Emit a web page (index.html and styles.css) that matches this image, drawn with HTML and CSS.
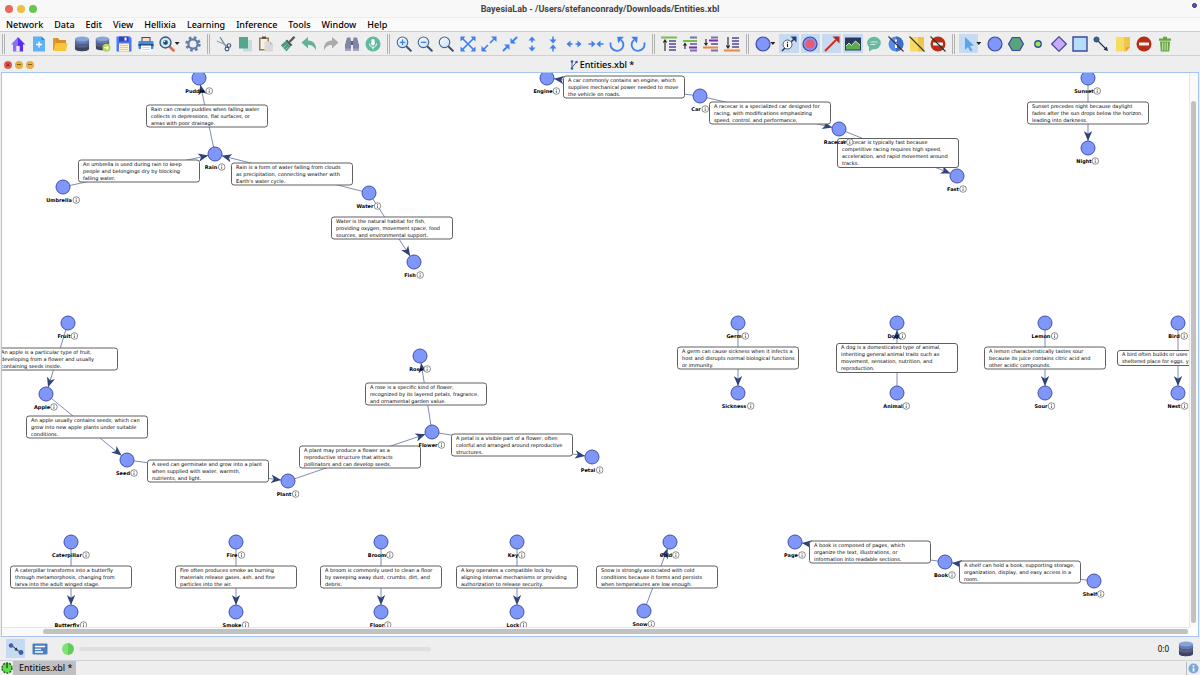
FILE: index.html
```html
<!DOCTYPE html>
<html lang="en">
<head>
<meta charset="utf-8">
<title>BayesiaLab - Entities.xbl</title>
<link rel="stylesheet" href="styles.css">
</head>
<body>
<svg class="defs" aria-hidden="true">
  <defs>
    <linearGradient id="lensFill" x1="0" y1="0" x2="1" y2="1"><stop offset="0" stop-color="#fff"/><stop offset="1" stop-color="#c3dcf8"/></linearGradient>
    <symbol id="db" viewBox="0 0 16 16">
      <path d="M1 3v10c0 3 14 3 14 0V3z" fill="#3f4560"/>
      <path d="M1 3v7c0 3 14 3 14 0V3z" fill="#595f80"/>
      <path d="M1 3v4c0 3 14 3 14 0V3z" fill="#6a79b4"/>
      <ellipse cx="8" cy="3" rx="7" ry="2.4" fill="#86a5d8"/>
      <path d="M1 6.4c0 3 14 3 14 0M1 9.900c0 3 14 3 14 0" fill="none" stroke="#39405f" stroke-width=".6"/>
    </symbol>
    <symbol id="lens" viewBox="0 0 16 16">
      <path d="M10.500 10.500l4.300 4.300" stroke="#3d5573" stroke-width="2" stroke-linecap="round"/>
      <circle cx="6.500" cy="6.300" r="5.300" fill="url(#lensFill)" stroke="#46648c" stroke-width="1.100"/>
    </symbol>
    <symbol id="stop" viewBox="0 0 16 16">
      <circle cx="8" cy="8" r="7.500" fill="#b72d18"/><rect x="3" y="6.500" width="10" height="3" rx=".5" fill="#f4f0f0"/>
    </symbol>
    <symbol id="note" viewBox="0 0 16 16">
      <path d="M1 1h8v14.500H1z" fill="#f6dc62"/><path d="M9 1h6v10l-4 4.500H9z" fill="#efc64c"/><path d="M15 11l-4 4.500V11z" fill="#f0963a"/>
    </symbol>
    <marker id="head" viewBox="0 0 9 8" markerWidth="10" markerHeight="9" refX="9" refY="4" orient="auto" markerUnits="userSpaceOnUse">
      <path d="M9 4L0 .200L2.500 4L0 7.800z" fill="#2f4378"/>
    </marker>
  </defs>
</svg>

<div class="window">
  <header class="titlebar">
    <div class="lights">
      <button class="light red" aria-label="Close"></button>
      <button class="light amber" aria-label="Minimize"></button>
      <button class="light green" aria-label="Zoom"></button>
    </div>
    <h1 class="title">BayesiaLab - /Users/stefanconrady/Downloads/Entities.xbl</h1>
    <div class="title-end"><span class="badge"></span></div>
  </header>

  <nav class="menubar">
    <button>Network</button><button>Data</button><button>Edit</button><button>View</button><button>Hellixia</button><button>Learning</button><button>Inference</button><button>Tools</button><button>Window</button><button>Help</button>
  </nav>

  <div class="toolbar">
    <span class="sep"></span>
    <div class="group g-file">
      <button aria-label="Home"><svg viewBox="0 0 16 16"><path d="M1 8.500L8 1v14.500H3V8.500z" fill="#8c6cff"/><path d="M8 1l7.200 7.500H13v7H8z" fill="#5b2df0"/><path d="M6.300 10h3.400v5.500H6.300z" fill="#eee"/></svg></button>
      <button aria-label="New"><svg viewBox="0 0 16 16"><path d="M2 .5h8.500l3.500 3.500v11.500H2z" fill="#5fb2f8"/><path d="M10.500 .5l3.500 3.500h-3.500z" fill="#2c84d6"/><path d="M8 5.500v6M5 8.500h6" stroke="#fff" stroke-width="1.300"/></svg></button>
      <button aria-label="Open"><svg viewBox="0 0 16 16"><path d="M1 2h5l1.500 2H14v4H1z" fill="#d98e22"/><path d="M1 2h3v12H1z" fill="#e0982b"/><path d="M3.500 7H15.500l-1.500 8H1.500z" fill="#f8c53a"/></svg></button>
      <button aria-label="Database"><svg><use href="#db"/></svg></button>
      <button aria-label="Database link"><svg viewBox="0 0 16 16"><use href="#db" width="15" height="15"/><circle cx="11.500" cy="11.700" r="4" fill="#b3d94a"/><path d="M9 11.700h4M11.500 9.900l1.800 1.800-1.800 1.800" fill="none" stroke="#fff" stroke-width="1.200"/></svg></button>
      <button aria-label="Save"><svg viewBox="0 0 16 16"><path d="M.5 .5H14l1.500 2v13H.5z" fill="#4c78ff"/><path d="M3 .5h9.500v5H3z" fill="#3444a8"/><path d="M8.500 1.500h2v3h-2z" fill="#fff"/><path d="M3 7.500h10v8H3z" fill="#fff3d0"/><path d="M4 9.500h8M4 11.500h8M4 13.500h8" stroke="#f0c460" stroke-width=".9"/></svg></button>
      <button aria-label="Print"><svg viewBox="0 0 16 16"><path d="M3.500 1h9v5h-9z" fill="#384763"/><path d="M4.500 2h7v4h-7z" fill="#f8dfc6"/><rect x=".5" y="5" width="15" height="8" rx="1" fill="#3e8be4"/><path d="M.5 8h15v2H.5z" fill="#264d8b"/><path d="M3 9.500h10v6H3z" fill="#fff"/><path d="M4.500 11.500h7M4.500 13.500h7" stroke="#c7cbd6" stroke-width=".8"/></svg></button>
      <button aria-label="Preview"><svg viewBox="0 0 16 16"><path d="M10.500 10.500l4 4" stroke="#e86b4b" stroke-width="2.600" stroke-linecap="round"/><circle cx="6.500" cy="6.500" r="5.500" fill="#a8dcf4" stroke="#3c5471" stroke-width="1.300"/><circle cx="6.500" cy="6.500" r="3.600" fill="none" stroke="#fff" stroke-width=".7"/><circle cx="6.500" cy="6.500" r="2.300" fill="#33455f"/><circle cx="5.500" cy="5.500" r=".8" fill="#fff"/></svg></button>
      <span class="drop"></span>
      <button aria-label="Settings"><svg viewBox="0 0 16 16"><circle cx="8" cy="8" r="4.600" fill="none" stroke="#607da6" stroke-width="2.200"/><circle cx="8" cy="8" r="6.400" fill="none" stroke="#607da6" stroke-width="2.600" stroke-dasharray="2.600 2.427"/></svg></button>
    </div>
    <span class="sep"></span>
    <div class="group g-edit">
      <button aria-label="Cut"><svg viewBox="0 0 16 16"><path d="M4 1l6.500 10.500" stroke="#6d8796" stroke-width="1.300"/><path d="M.8 5l10.500 4.500" stroke="#8ba4b0" stroke-width="1.200"/><circle cx="11" cy="13" r="1.900" fill="none" stroke="#3c5878" stroke-width="1.100"/><circle cx="13" cy="9.500" r="1.800" fill="none" stroke="#3c5878" stroke-width="1.100"/></svg></button>
      <button aria-label="Copy"><svg viewBox="0 0 16 16"><path d="M6 4h9v11.500H6z" fill="#c5dce0"/><path d="M2 1h9v11.500H2z" fill="#56a58e"/></svg></button>
      <button aria-label="Paste"><svg viewBox="0 0 16 16"><path d="M1 1.500h10v13H1z" fill="#9a7b4c"/><path d="M2.500 3h7v10h-7z" fill="#f4f0e6"/><path d="M4 .5h4v2.500H4z" fill="#555"/><path d="M6.500 5.500h5.500l3 3v7H6.500z" fill="#d9d9d9"/><path d="M12 5.500l3 3h-3z" fill="#b8b8b8"/></svg></button>
      <button aria-label="Brush"><svg viewBox="0 0 16 16"><path d="M14.500 .8L9.500 6" stroke="#555" stroke-width="2.200"/><path d="M7 3.500l5.500 5.500-2 1.500L5.500 5z" fill="#545b5b"/><path d="M5.500 5l5 5.500-4 5L.8 9.300z" fill="#4f9c83"/><path d="M3.500 11.500l2-2M5.500 13.500l2-2" stroke="#b5dccc" stroke-width=".8"/></svg></button>
      <button aria-label="Undo"><svg viewBox="0 0 16 16"><path d="M.5 6.500L7 1v3.500c5.500 0 8.500 3.500 8 10C13.500 11 11.500 9 7 9v3.500z" fill="#68b196"/></svg></button>
      <button aria-label="Redo"><svg viewBox="0 0 16 16"><path d="M15.500 6.500L9 1v3.500c-5.500 0-8.500 3.500-8 10C2.500 11 4.500 9 9 9v3.500z" fill="#a9aaa9"/></svg></button>
      <button aria-label="Find"><svg viewBox="0 0 16 16"><path d="M3 1.500h3.500l.5 4V15H1V9z" fill="#7f86a6"/><path d="M13 1.500H9.500l-.5 4V15h6V9z" fill="#7f86a6"/><path d="M7 5h2v4H7z" fill="#596080"/><path d="M1 12.500h6V15H1zM9 12.500h6V15H9z" fill="#a3a8c0"/></svg></button>
      <button aria-label="Dictate"><svg viewBox="0 0 16 16"><circle cx="8" cy="8" r="7.500" fill="#61b9a1"/><rect x="6.300" y="3" width="3.400" height="6.500" rx="1.700" fill="#fff"/><path d="M4.500 7.500c0 5 7 5 7 0M8 11v2.500" fill="none" stroke="#fff"/></svg></button>
    </div>
    <span class="sep"></span>
    <div class="group g-view">
      <button aria-label="Zoom in"><svg viewBox="0 0 16 16"><use href="#lens"/><path d="M6.500 3.500v5.600M3.700 6.300h5.600" stroke="#3f80e6" stroke-width="1.300"/></svg></button>
      <button aria-label="Zoom out"><svg viewBox="0 0 16 16"><use href="#lens"/><path d="M3.700 6.300h5.600" stroke="#3f80e6" stroke-width="1.300"/></svg></button>
      <button aria-label="Zoom default"><svg><use href="#lens"/></svg></button>
      <button aria-label="Fit"><svg viewBox="0 0 16 16"><path d="M2 2l12 12M14 2L2 14" stroke="#3f80f0" stroke-width="1.700"/><path d="M.5 .5h5l-5 5zM15.500 .5v5l-5-5zM.5 15.500v-5l5 5zM15.500 15.500h-5l5-5z" fill="#3f80f0"/></svg></button>
      <button aria-label="Expand"><svg viewBox="0 0 16 16"><path d="M3 13l4-4M9 7l4-4" stroke="#3f80f0" stroke-width="1.700"/><path d="M15.500 .5v5.500l-5.500-5.500zM.5 15.500v-5.500l5.500 5.500z" fill="#3f80f0"/></svg></button>
      <button aria-label="Shrink"><svg viewBox="0 0 16 16"><path d="M1 15l5-5M10 6l5-5" stroke="#3f80f0" stroke-width="1.800"/><path d="M8.500 2v5.500H14zM7.500 14V8.500H2z" fill="#3f80f0"/></svg></button>
      <button aria-label="Expand vertically"><svg viewBox="0 0 16 16"><path d="M8 2v4.500M8 9.500V14" stroke="#3f80f0" stroke-width="1.500"/><path d="M8 .5l3.500 4h-7zM8 15.500l3.500-4h-7z" fill="#3f80f0"/></svg></button>
      <button aria-label="Shrink vertically"><svg viewBox="0 0 16 16"><path d="M8 .5v4M8 11.500v4" stroke="#3f80f0" stroke-width="1.500"/><path d="M8 7.500l3.500-4h-7zM8 8.500l3.500 4h-7z" fill="#3f80f0"/></svg></button>
      <button aria-label="Expand horizontally"><svg viewBox="0 0 16 16"><path d="M2 8h4.500M9.500 8H14" stroke="#3f80f0" stroke-width="1.500"/><path d="M.5 8l4-3.500v7zM15.500 8l-4-3.500v7z" fill="#3f80f0"/></svg></button>
      <button aria-label="Shrink horizontally"><svg viewBox="0 0 16 16"><path d="M.5 8h4M11.500 8h4" stroke="#3f80f0" stroke-width="1.500"/><path d="M7.500 8l-4-3.500v7zM8.500 8l4-3.500v7z" fill="#3f80f0"/></svg></button>
      <button aria-label="Rotate left"><svg viewBox="0 0 16 16"><path d="M1.700 6.500C.5 11 4 14.800 8 14.800c6 0 8.500-7 4-11" fill="none" stroke="#3f80f0" stroke-width="1.800"/><path d="M8.300 .8h6.500L9 7.300z" fill="#3f80f0"/></svg></button>
      <button aria-label="Rotate right"><svg viewBox="0 0 16 16"><path d="M14.300 6.500C15.500 11 12 14.800 8 14.800c-6 0-8.500-7-4-11" fill="none" stroke="#3f80f0" stroke-width="1.800"/><path d="M7.700 .8H1.200L7 7.300z" fill="#3f80f0"/></svg></button>
    </div>
    <span class="sep"></span>
    <div class="group g-order">
      <button aria-label="Bring to front"><svg viewBox="0 0 16 16"><path d="M0 1.500h16" stroke="#74c04c" stroke-width="2"/><path d="M8 5h7M8 8h7M8 11h7M8 14h7" stroke="#7a70ae" stroke-width="1.800"/><path d="M4 4.500V15M2.300 6.500L4 4l1.700 2.500" fill="none" stroke="#222" stroke-width="1.100"/></svg></button>
      <button aria-label="Move up"><svg viewBox="0 0 16 16"><path d="M1 5h14" stroke="#74c04c" stroke-width="2"/><path d="M8 1.500h7M8 14.500h7" stroke="#7a70ae" stroke-width="1.800"/><path d="M8 8h7" stroke="#7a70ae" stroke-width="1.800"/><path d="M7 11.500h8" stroke="#7a2bb0" stroke-width="2"/><path d="M3 7.500V13M1.500 9.500L3 7.500l1.500 2" fill="none" stroke="#222" stroke-width="1.100"/></svg></button>
      <button aria-label="Move down"><svg viewBox="0 0 16 16"><path d="M8 1.500h7M8 8h7M8 14.500h7" stroke="#7a70ae" stroke-width="1.800"/><path d="M6 4.500h9" stroke="#7a2bb0" stroke-width="2"/><path d="M0 11.500h15" stroke="#e8893c" stroke-width="2"/><path d="M3 3v6M1.500 7L3 9l1.500-2" fill="none" stroke="#222" stroke-width="1.100"/></svg></button>
      <button aria-label="Send to back"><svg viewBox="0 0 16 16"><path d="M0 14.500h16" stroke="#e8893c" stroke-width="2"/><path d="M8 2h7M8 5h7M8 8h7M8 11h7" stroke="#7a70ae" stroke-width="1.800"/><path d="M4 1v10.500M2.300 9.500L4 12l1.700-2.500" fill="none" stroke="#222" stroke-width="1.100"/></svg></button>
    </div>
    <span class="sep"></span>
    <div class="group g-show">
      <button aria-label="Node style"><svg viewBox="0 0 16 16"><circle cx="8" cy="8" r="7" fill="#7f97f9" stroke="#3d479f" stroke-width="1.200"/></svg></button>
      <span class="drop"></span>
      <button class="on" aria-label="Arc comments"><svg viewBox="0 0 16 16"><path d="M1 15L13 3" stroke="#233253" stroke-width="1.500"/><path d="M15.500 .5v6l-6-6z" fill="#233f7a"/><circle cx="6.500" cy="8.500" r="4.500" fill="#fff" stroke="#333" stroke-width=".8"/><path d="M6.500 7.800v3.200M6.500 5.700v1.200" stroke="#222" stroke-width="1.200"/></svg></button>
      <button class="on" aria-label="Target"><svg viewBox="0 0 16 16"><circle cx="8" cy="8" r="7" fill="#7f97f9" stroke="#3d479f" stroke-width="1.200"/><circle cx="8" cy="8" r="4.700" fill="#e85b70"/></svg></button>
      <button class="on" aria-label="Arc colour"><svg viewBox="0 0 16 16"><path d="M1 15L12 4" stroke="#cf2f17" stroke-width="2"/><path d="M15.500 .5v7l-7-7z" fill="#b92512"/></svg></button>
      <button class="on" aria-label="Images"><svg viewBox="0 0 16 16"><path d="M0 1.500h16v13H0z" fill="#2a3a5e"/><path d="M1 13.500V10l3-3 2.500 2.500L10.500 5l4.500 4v4.500z" fill="#57b04a"/><path d="M1 10l3-3 2.500 2.500L10.500 5l4.500 4" fill="none" stroke="#e4f2e2" stroke-width=".9"/></svg></button>
      <button aria-label="Comments"><svg viewBox="0 0 16 16"><ellipse cx="8" cy="7" rx="6.800" ry="6.300" fill="#67b9a0"/><path d="M3 11v4.500l5-3z" fill="#67b9a0"/><path d="M4.500 6h7M4.500 8.500h5" stroke="#dff3ec" stroke-width=".9"/></svg></button>
      <button aria-label="Hide info"><svg viewBox="0 0 16 16"><circle cx="8" cy="8" r="7.500" fill="#5a8bea"/><path d="M8 .5a7.500 7.500 0 010 15z" fill="#3e6cc8"/><path d="M8 7v5M8 3.500v2" stroke="#fff" stroke-width="2"/><path d="M.5 .5l15 15" stroke="#333" stroke-width="1.100"/></svg></button>
      <button aria-label="Hide notes"><svg viewBox="0 0 16 16"><path d="M1 1h8v14.500H1z" fill="#f6dc62"/><path d="M9 1h6v14.500H9z" fill="#efc64c"/><path d="M.5 .5l15 15" stroke="#333" stroke-width="1.100"/></svg></button>
      <button aria-label="Hide forbidden"><svg viewBox="0 0 16 16"><use href="#stop"/><path d="M.5 .5l15 15" stroke="#333" stroke-width="1.100"/></svg></button>
    </div>
    <span class="sep"></span>
    <div class="group g-draw">
      <button class="on" aria-label="Select"><svg viewBox="0 0 16 16"><path d="M4 1l9 8.500-4 .5 2.500 4.500-2 1L7 11l-3 3z" fill="#57a6ea"/></svg></button>
      <span class="drop"></span>
      <button aria-label="Node"><svg viewBox="0 0 16 16"><circle cx="8" cy="8" r="7" fill="#7f97f9" stroke="#3d479f" stroke-width="1.200"/></svg></button>
      <button aria-label="Constraint"><svg viewBox="0 0 16 16"><path d="M4.300 1.500h7.400L15.400 8l-3.700 6.500H4.300L.6 8z" fill="#57a37c" stroke="#3d479f" stroke-width="1.200"/></svg></button>
      <button aria-label="Small node"><svg viewBox="0 0 16 16"><circle cx="8" cy="8" r="3.200" fill="#8cf04c" stroke="#3d479f" stroke-width="1.400"/></svg></button>
      <button aria-label="Utility"><svg viewBox="0 0 16 16"><path d="M8 .7L15.300 8 8 15.300.7 8z" fill="#c9a9fa" stroke="#3d479f" stroke-width="1.200"/></svg></button>
      <button aria-label="Decision"><svg viewBox="0 0 16 16"><path d="M1 1h14v14H1z" fill="#b5def8" stroke="#3d479f" stroke-width="1.400"/></svg></button>
      <button aria-label="Arc"><svg viewBox="0 0 16 16"><path d="M3.500 3.500l9 9" stroke="#222c44" stroke-width="1.100"/><circle cx="3.500" cy="3.500" r="2.600" fill="#3e6394" stroke="#26406b" stroke-width=".8"/><path d="M15 15l-4.500-1.200 3.300-3.300z" fill="#1f3159"/></svg></button>
      <button aria-label="Note"><svg><use href="#note"/></svg></button>
      <button aria-label="Forbidden"><svg><use href="#stop"/></svg></button>
      <button aria-label="Delete"><svg viewBox="0 0 16 16"><path d="M2 2.500h12v2.200H2zM6 .8h4v2H6zM3 5.500h10l-.8 10H3.800z" fill="#68a53c"/><path d="M5.700 6.500v8M8 6.500v8M10.300 6.500v8" stroke="#d7ebc8" stroke-width=".9"/></svg></button>
    </div>
  </div>

  <div class="docbar">
    <div class="doc-buttons">
      <button class="doc-dot close" aria-label="Close document"></button>
      <button class="doc-dot" aria-label="Minimize document"></button>
      <button class="doc-dot" aria-label="Restore document"></button>
    </div>
    <h2 class="doc-title"><svg class="doc-icon" viewBox="0 0 8 10"><path d="M2 1.500V9M2 7.500L6.500 2" stroke="#3c5c96" stroke-width="1"/><circle cx="2" cy="1.500" r="1.300" fill="#3c5c96"/><circle cx="6.500" cy="2" r="1.300" fill="#3c5c96"/><circle cx="2" cy="8.500" r="1.300" fill="#3c5c96"/></svg>Entities.xbl *</h2>
    <div></div>
  </div>

  <main class="canvas">
    <div class="graph" id="graph"></div>
    <div class="vscroll"><div class="thumb"></div></div>
    <div class="hscroll"><div class="thumb"></div></div>
    <div></div>
  </main>

  <div class="status">
    <button class="mode on" aria-label="Modeling mode"><svg viewBox="0 0 16 16"><path d="M3 4l10 8" stroke="#222c44"/><path d="M9.500 9.700L6.500 9.200 8.800 6.300z" fill="#222c44"/><circle cx="3" cy="4.500" r="2.200" fill="#3f5ea6"/><circle cx="13" cy="11.500" r="2.400" fill="#3f5ea6"/></svg></button>
    <button class="mode" aria-label="Validation mode"><svg viewBox="0 0 16 16"><rect x=".5" y="2.500" width="15" height="11" rx="1" fill="#4a7fc4"/><path d="M3 5.500h10M3 8.300h6M3 11h8" stroke="#fff" stroke-width="1.300"/></svg></button>
    <span class="ready"></span>
    <span class="progress"></span>
    <span class="ratio">0:0</span>
    <svg class="status-db"><use href="#db"/></svg>
  </div>

  <footer class="taskbar">
    <svg class="app-icon" viewBox="0 0 12 12"><circle cx="6" cy="6" r="5" fill="#5de04a" stroke="#245c1c" stroke-width="1.400" stroke-dasharray="2 1.140"/><path d="M6 1.500V6" stroke="#222" stroke-width="1.200"/></svg>
    <button class="task">Entities.xbl *</button>
    <button class="info" aria-label="Information"><svg viewBox="0 0 12 12"><circle cx="6" cy="6" r="5.500" fill="#7ba7d8"/><path d="M6 5.200v4M6 2.500v1.600" stroke="#fff" stroke-width="1.800"/></svg></button>
  </footer>
</div>
<script src="graph.js"></script>
</body>
</html>
```
FILE: styles.css
```css
* { box-sizing: border-box; }
body {
  margin: 0;
  background: #eee;
  color: #000;
  font-family: "Noto Sans", "DejaVu Sans", sans-serif;
  font-size: 9px;
  line-height: 12px;
}
button {
  margin: 0;
  padding: 0;
  border: 0;
  background: none;
  color: inherit;
  font: inherit;
}
h1, h2 { margin: 0; font-size: 9px; }
svg { display: block; }
.defs { position: absolute; width: 0; height: 0; }
.window { display: flex; flex-direction: column; height: 100vh; overflow: hidden; }

.titlebar {
  flex: none;
  display: grid;
  grid-template-columns: 1fr auto 1fr;
  align-items: center;
  height: 18px;
  border-bottom: 1px solid #ececec;
  background: #f8f8f8;
}
.lights { display: flex; gap: 4px; padding-left: 5px; }
.light { width: 8px; height: 8px; border-radius: 50%; }
.red { background: #e5695e; }
.amber { background: #edbe49; }
.green { background: #69c552; }
.title { color: #444; font-family: Roboto, sans-serif; font-weight: 700; }
.title-end { display: flex; align-self: start; justify-content: flex-end; padding: 3px 3px 0 0; }
.badge { width: 5px; height: 5px; border: 1px solid #2d2d55; border-radius: 50%; background: #5a50d8; }

.menubar {
  flex: none;
  display: flex;
  gap: 11px;
  height: 14px;
  padding: 1px 0 0 6px;
  border-bottom: 1px solid #ccc;
  background: #fafafa;
  font-weight: 500;
}

.toolbar {
  flex: none;
  display: flex;
  align-items: center;
  height: 24px;
  overflow: hidden;
  border-bottom: 1px solid #cfcfcf;
}
.sep {
  flex: none;
  width: 3px;
  height: 20px;
  margin: 0 3px;
  border: 1px solid #b2b2b2;
  border-width: 0 1px;
}
.sep:first-child { margin: 0 2px; }
.group { flex: none; display: flex; align-items: center; }
.group button { flex: 1; display: flex; justify-content: center; align-items: center; height: 19px; margin: 0 1px; }
.group svg { width: 16px; height: 16px; }
.g-file, .g-show { width: 197px; }
.g-edit { width: 171px; }
.g-view { width: 256px; }
.g-order { width: 85px; }
.g-draw { width: 218px; }
.on { background: #c6dbf2; }
.drop {
  width: 5px;
  height: 3px;
  margin: 0 3px 0 -3px;
  background: #222;
  clip-path: polygon(0 0, 100% 0, 50% 100%);
}

.docbar {
  flex: none;
  display: grid;
  grid-template-columns: 1fr auto 1fr;
  align-items: center;
  height: 16px;
  padding: 1px 0 0 4px;
}
.doc-buttons { display: flex; gap: 3px; }
.doc-dot {
  display: flex;
  justify-content: center;
  align-items: center;
  width: 8px;
  height: 8px;
  border-radius: 50%;
  background: #e6ae43;
}
.doc-dot::after { content: ""; width: 4px; height: 1px; background: #875f18; }
.doc-dot.close { background: #e0604f; }
.doc-dot.close::after { content: "×"; width: auto; height: auto; background: none; color: #8c1f18; font: bold 7px/8px "DejaVu Sans", sans-serif; }
.doc-title { display: flex; align-items: center; gap: 2px; font-weight: 500; }
.doc-icon { width: 8px; height: 10px; }

.canvas {
  flex: 1;
  display: grid;
  grid-template-columns: 1fr 9px;
  grid-template-rows: 1fr 9px;
  min-height: 0;
  margin: 0 1px;
  border: 1px solid #a5c4f0;
  background: #fff;
}
.graph { position: relative; overflow: hidden; }
.vscroll { padding: 28px 2px 4px 1px; border-left: 1px solid #e6e6e6; background: #fafafa; }
.hscroll { padding: 1px 1px 2px 41px; border-top: 1px solid #e6e6e6; background: #fafafa; }
.thumb { height: 100%; border-radius: 3px; background: #c1c1c1; }

.edges { position: absolute; inset: 0; width: 100%; height: 100%; }
.edge { stroke: #7f8cb6; stroke-width: 1; }
.node { fill: #7f97f9; stroke: #434fb0; stroke-width: 1; }
.note {
  position: absolute;
  width: 122px;
  padding: 0 4px;
  border: 1px solid #606060;
  border-radius: 3px;
  background: #fff;
  transform: translate(-50%, -50%);
  font: 5px/7px "DejaVu Sans", sans-serif;
  white-space: pre;
}
.label {
  position: absolute;
  display: flex;
  align-items: center;
  transform: translate(-50%, -50%);
  font: bold 5px/7px "DejaVu Sans", sans-serif;
}
.label svg { flex: none; width: 8px; height: 8px; }

.status {
  flex: none;
  display: flex;
  align-items: center;
  height: 24px;
  padding: 0 6px;
  border-bottom: 1px solid #d0d4da;
}
.mode { display: flex; justify-content: center; align-items: center; width: 19px; height: 19px; margin-right: 5px; }
.mode svg { width: 16px; height: 16px; }
.ready { width: 12px; height: 12px; margin-left: 8px; border-radius: 50%; background: linear-gradient(90deg, #7ee374 50%, #62cc5b 50%); }
.progress { flex: 0 1 352px; height: 4px; margin-left: 5px; border-radius: 2px; background: #dfdfdf; }
.ratio { margin-left: auto; font-size: 8px; }
.status-db { width: 16px; height: 16px; margin-left: 9px; }

.taskbar { flex: none; display: flex; align-items: center; height: 14px; }
.app-icon { width: 12px; height: 12px; margin-left: 1px; }
.task { height: 14px; padding: 0 4px 0 6px; background: #c0c0c0; }
.info { margin-left: auto; padding: 1px; border-left: 1px solid #bbb; }
.info svg { width: 11px; height: 11px; }
```
FILE: graph.js
```js
const ORIGIN = { x: 2, y: 73 };
const RADIUS = 7;

const nodes = {
  Puddle: [199, 78], Rain: [215, 154], Umbrella: [63, 187], Water: [369, 193], Fish: [414, 262],
  Engine: [547, 78], Car: [700, 96], Racecar: [839, 129], Fast: [957, 176],
  Sunset: [1088, 78], Night: [1088, 148],
  Fruit: [68, 323], Apple: [46, 394], Seed: [127, 460], Plant: [288, 481], Flower: [432, 432],
  Rose: [420, 356], Petal: [592, 457],
  Germ: [738, 323], Sickness: [738, 393], Dog: [897, 323], Animal: [897, 393],
  Lemon: [1045, 323], Sour: [1045, 393], Bird: [1178, 323], Nest: [1178, 393],
  Caterpillar: [71, 542], Butterfly: [71, 612], Fire: [236, 542], Smoke: [236, 612],
  Broom: [381, 542], Floor: [381, 612], Key: [517, 542], Lock: [517, 612],
  Cold: [670, 542], Snow: [644, 611], Page: [795, 542], Book: [945, 562], Shelf: [1094, 581]
};

const edges = [
  ["Rain", "Puddle", "Rain can create puddles when falling water\ncollects in depressions, flat surfaces, or\nareas with poor drainage."],
  ["Umbrella", "Rain", "An umbrella is used during rain to keep\npeople and belongings dry by blocking\nfalling water."],
  ["Water", "Rain", "Rain is a form of water falling from clouds\nas precipitation, connecting weather with\nEarth's water cycle."],
  ["Water", "Fish", "Water is the natural habitat for fish,\nproviding oxygen, movement space, food\nsources, and environmental support."],
  ["Car", "Engine", "A car commonly contains an engine, which\nsupplies mechanical power needed to move\nthe vehicle on roads."],
  ["Car", "Racecar", "A racecar is a specialized car designed for\nracing, with modifications emphasizing\nspeed, control, and performance."],
  ["Racecar", "Fast", "A racecar is typically fast because\ncompetitive racing requires high speed,\nacceleration, and rapid movement around\ntracks."],
  ["Sunset", "Night", "Sunset precedes night because daylight\nfades after the sun drops below the horizon,\nleading into darkness."],
  ["Fruit", "Apple", "An apple is a particular type of fruit,\ndeveloping from a flower and usually\ncontaining seeds inside."],
  ["Apple", "Seed", "An apple usually contains seeds, which can\ngrow into new apple plants under suitable\nconditions."],
  ["Seed", "Plant", "A seed can germinate and grow into a plant\nwhen supplied with water, warmth,\nnutrients, and light."],
  ["Plant", "Flower", "A plant may produce a flower as a\nreproductive structure that attracts\npollinators and can develop seeds."],
  ["Flower", "Rose", "A rose is a specific kind of flower,\nrecognized by its layered petals, fragrance,\nand ornamental garden value."],
  ["Flower", "Petal", "A petal is a visible part of a flower, often\ncolorful and arranged around reproductive\nstructures."],
  ["Germ", "Sickness", "A germ can cause sickness when it infects a\nhost and disrupts normal biological functions\nor immunity."],
  ["Animal", "Dog", "A dog is a domesticated type of animal,\ninheriting general animal traits such as\nmovement, sensation, nutrition, and\nreproduction."],
  ["Lemon", "Sour", "A lemon characteristically tastes sour\nbecause its juice contains citric acid and\nother acidic compounds."],
  ["Bird", "Nest", "A bird often builds or uses\nsheltered place for eggs, y"],
  ["Caterpillar", "Butterfly", "A caterpillar transforms into a butterfly\nthrough metamorphosis, changing from\nlarva into the adult winged stage."],
  ["Fire", "Smoke", "Fire often produces smoke as burning\nmaterials release gases, ash, and fine\nparticles into the air."],
  ["Broom", "Floor", "A broom is commonly used to clean a floor\nby sweeping away dust, crumbs, dirt, and\ndebris."],
  ["Key", "Lock", "A key operates a compatible lock by\naligning internal mechanisms or providing\nauthorization to release security."],
  ["Snow", "Cold", "Snow is strongly associated with cold\nconditions because it forms and persists\nwhen temperatures are low enough."],
  ["Book", "Page", "A book is composed of pages, which\norganize the text, illustrations, or\ninformation into readable sections."],
  ["Shelf", "Book", "A shelf can hold a book, supporting storage,\norganization, display, and easy access in a\nroom."]
];

const INFO = '<svg viewBox="0 0 8 8"><circle cx="4" cy="4" r="3.300" fill="#fff" stroke="#444" stroke-width=".6"/><path d="M4 3.500v2.500M4 1.900v.9" stroke="#333" stroke-width=".7"/></svg>';

const at = name => ({ x: nodes[name][0] - ORIGIN.x, y: nodes[name][1] - ORIGIN.y });
let lines = "", circles = "", notes = "", labels = "";

for (const [from, to, text] of edges) {
  const a = at(from), b = at(to);
  const length = Math.hypot(b.x - a.x, b.y - a.y);
  const endX = b.x - (b.x - a.x) / length * RADIUS;
  const endY = b.y - (b.y - a.y) / length * RADIUS;
  lines += `<line class="edge" x1="${a.x}" y1="${a.y}" x2="${endX}" y2="${endY}" marker-end="url(#head)"/>`;
  const left = Math.round((a.x + b.x) / 2), top = Math.round((a.y + b.y) / 2);
  notes += `<div class="note" style="left:${left}px;top:${top}px">${text}</div>`;
}
for (const name in nodes) {
  const p = at(name);
  circles += `<circle class="node" cx="${p.x}" cy="${p.y}" r="${RADIUS}"/>`;
  labels += `<div class="label" style="left:${p.x}px;top:${p.y + 13}px">${name}${INFO}</div>`;
}
document.getElementById("graph").innerHTML =
  `<svg class="edges">${lines}${circles}</svg>${notes}${labels}`;
```
